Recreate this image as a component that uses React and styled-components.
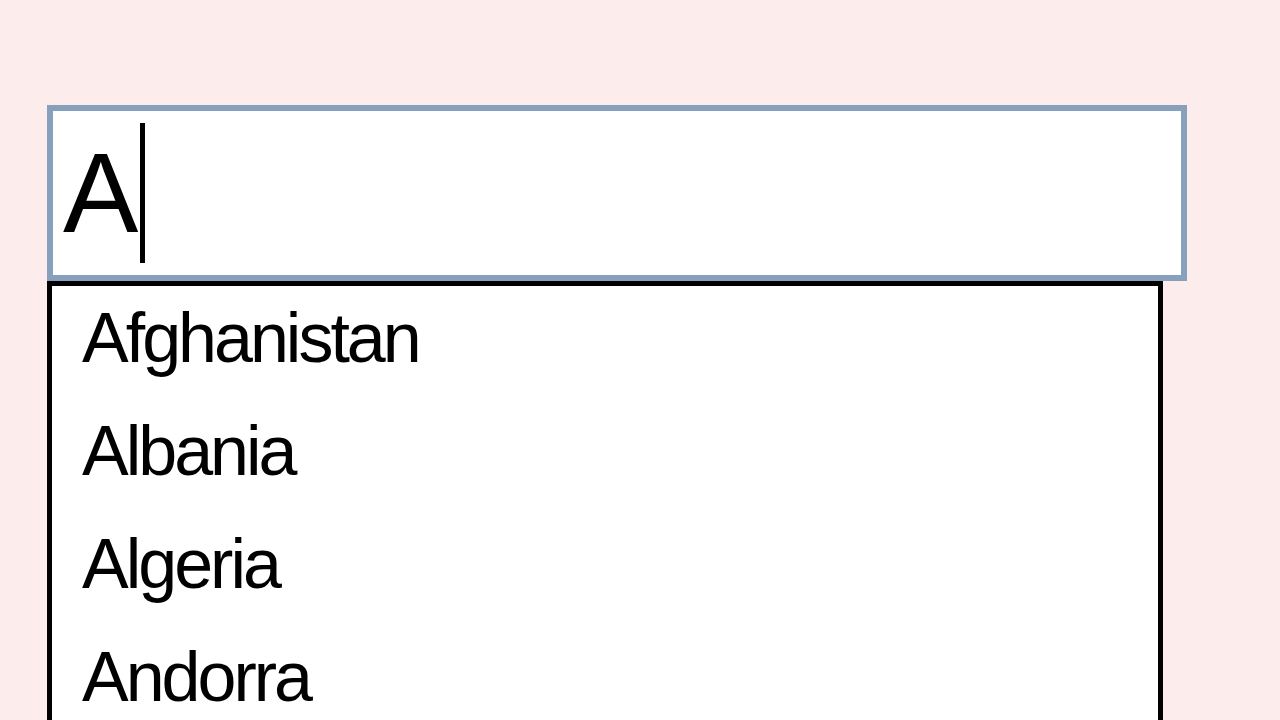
import React from 'react'
import styled, { createGlobalStyle } from 'styled-components'

const GlobalStyle = createGlobalStyle`
  html, body {
    margin: 0;
    padding: 0;
    background: #fdecec;
    font-family: "Liberation Sans", Arial, sans-serif;
    overflow: hidden;
  }
`

const Page = styled.div`
  padding: 105px 0 0 47px;
  height: 720px;
  box-sizing: border-box;
`

const Combo = styled.div`
  display: flex;
  flex-direction: column;
  align-items: flex-start;
`

const Field = styled.div`
  box-sizing: border-box;
  width: 1140px;
  height: 176px;
  border: 6px solid #87a0bb;
  background: #fff;
  display: flex;
  align-items: center;
  padding-left: 10px;
  font-size: 113px;
  line-height: 1;
  color: #000;
`

const Caret = styled.span`
  display: block;
  width: 5px;
  height: 140px;
  margin-left: 2px;
  background: #000;
`

const Menu = styled.ul`
  box-sizing: border-box;
  width: 1116px;
  margin: 0;
  padding: 0;
  list-style: none;
  border: 5px solid #000;
  border-bottom: none;
  background: #fff;
  height: 450px;
`

const Option = styled.li`
  padding: 0 0 9px 30px;
  font-size: 70px;
  line-height: 104px;
  letter-spacing: -3px;
  color: #000;
  white-space: nowrap;
`

const countries = ['Afghanistan', 'Albania', 'Algeria', 'Andorra']

export default function App() {
  return (
    <Page>
      <GlobalStyle />
      <Combo>
        <Field>
          A
          <Caret />
        </Field>
        <Menu>
          {countries.map(c => (
            <Option key={c}>{c}</Option>
          ))}
        </Menu>
      </Combo>
    </Page>
  )
}
